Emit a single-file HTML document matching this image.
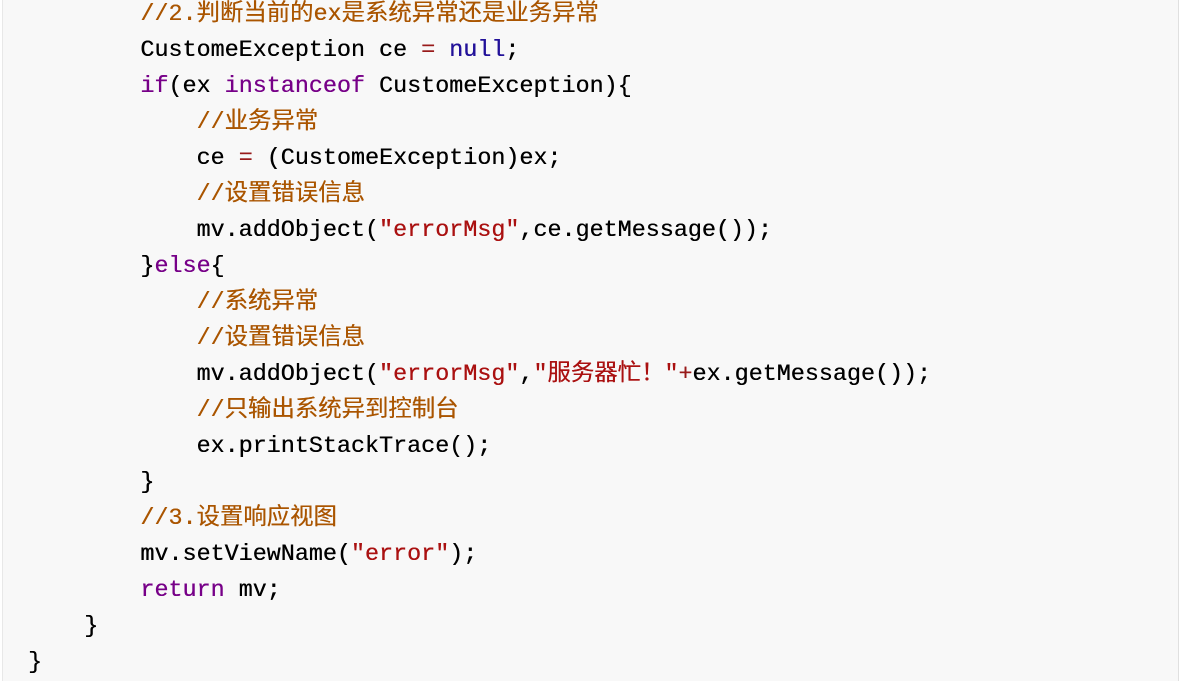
<!DOCTYPE html>
<html><head><meta charset="utf-8"><style>
html,body{margin:0;padding:0;width:1181px;height:681px;overflow:hidden;background:#fff}
.box{position:absolute;left:2px;top:0;width:1175px;height:681px;background:#f8f8f8;border-left:1px solid #e8e8e8;border-right:1px solid #e0e0e0}
pre{position:absolute;left:28px;top:-3px;margin:0;font-family:"Liberation Mono","Noto Sans CJK SC",monospace;font-size:23.4px;line-height:36px;color:#000;white-space:pre;text-shadow:0.3px 0 0 currentColor}
.c{color:#aa5500}.k{color:#770088}.a{color:#221199}.s{color:#aa1111}.o{color:#981a1a}
</style></head><body><div class="box"></div>
<pre>        <span class="c">//2.判断当前的ex是系统异常还是业务异常</span>
        CustomeException ce <span class="o">=</span> <span class="a">null</span>;
        <span class="k">if</span>(ex <span class="k">instanceof</span> CustomeException){
            <span class="c">//业务异常</span>
            ce <span class="o">=</span> (CustomeException)ex;
            <span class="c">//设置错误信息</span>
            mv.addObject(<span class="s">"errorMsg"</span>,ce.getMessage());
        }<span class="k">else</span>{
            <span class="c">//系统异常</span>
            <span class="c">//设置错误信息</span>
            mv.addObject(<span class="s">"errorMsg"</span>,<span class="s">"服务器忙！"</span><span class="o">+</span>ex.getMessage());
            <span class="c">//只输出系统异到控制台</span>
            ex.printStackTrace();
        }
        <span class="c">//3.设置响应视图</span>
        mv.setViewName(<span class="s">"error"</span>);
        <span class="k">return</span> mv;
    }
}</pre>
</body></html>
